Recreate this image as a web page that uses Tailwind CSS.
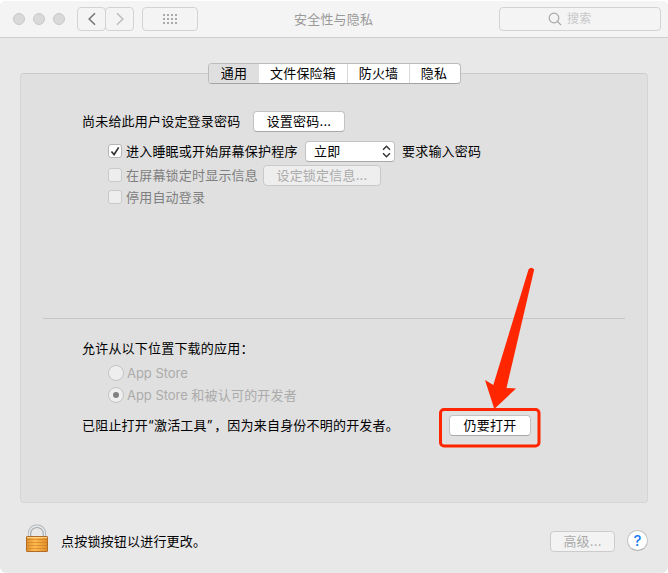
<!DOCTYPE html>
<html lang="zh-CN">
<head>
<meta charset="utf-8">
<title>安全性与隐私</title>
<script src="https://cdn.jsdelivr.net/npm/@tailwindcss/browser@4"></script>
</head>
<body class="w-[668px] h-[573px] overflow-hidden bg-white">
<div class="relative pt-px w-[668px] h-[573px] font-['Inter','Noto_Sans_CJK_SC',sans-serif] text-[13px] leading-[20px] tracking-[0.2px] text-black whitespace-nowrap">
<div class="w-[668px] h-[572px] rounded-[6px] bg-[#e8e8e8] overflow-hidden flex flex-col">
  <header class="h-[37px] shrink-0 bg-[#f4f4f4] border-b border-[#d0d0d0] flex items-center pl-[13px] pr-[7px]">
    <div class="flex gap-2">
      <span class="size-3 rounded-full bg-[#d9d9d9] border border-[#c9c9c9]"></span>
      <span class="size-3 rounded-full bg-[#d9d9d9] border border-[#c9c9c9]"></span>
      <span class="size-3 rounded-full bg-[#d9d9d9] border border-[#c9c9c9]"></span>
    </div>
    <div class="ml-3 flex">
      <button class="w-[29px] h-6 border border-[#d3d3d3] rounded-[4px] flex items-center justify-center"><svg class="size-[14px]" viewBox="0 0 14 14" fill="none" stroke="#777" stroke-width="1.6"><path d="M10 1.3 4.2 7 10 12.7"/></svg></button>
      <button class="-ml-px w-[29px] h-6 border border-[#d3d3d3] rounded-[4px] flex items-center justify-center"><svg class="size-[14px]" viewBox="0 0 14 14" fill="none" stroke="#bcbcbc" stroke-width="1.5"><path d="M4 1.3 9.8 7 4 12.7"/></svg></button>
    </div>
    <button class="ml-2 w-14 h-6 border border-[#d3d3d3] rounded-[4px] flex items-center justify-center">
      <svg width="14" height="10" viewBox="0 0 14 10" stroke="#aaa" stroke-width="2" stroke-dasharray="2 2"><path d="M0 1H14M0 5H14M0 9H14"/></svg>
    </button>
    <h1 class="ml-[96px] w-[80px] text-[#999]">安全性与隐私</h1>
    <div class="ml-auto w-[162px] h-6 border border-[#d3d3d3] rounded-[4px] flex items-center pl-[48px] text-[#c8c8c8] text-[12px]">
      <svg class="size-[14px] mr-[5px]" viewBox="0 0 14 14" fill="none" stroke="#a8a8a8" stroke-width="1.2"><circle cx="6" cy="6" r="4.8"/><path d="m9.5 9.5 3.6 3.6"/></svg>搜索
    </div>
  </header>

  <main class="mt-[35px] mx-5 h-[430px] w-[628px] shrink-0 rounded-[4px] border border-[#d5d5d5] border-t-[#cbcbcb] bg-[#e0e0e0] flex flex-col">
    <nav class="-mt-[11px] ml-[187px] w-[253px] h-[21px] shrink-0 rounded-[4px] border border-[#bcbcbc] border-b-[#a3a3a3] bg-white flex text-center leading-[19px]">
      <span class="w-[50px] bg-[#dfdfdf] rounded-l-[3px]">通用</span>
      <span class="w-[89px] border-r border-[#d8d8d8]">文件保险箱</span>
      <span class="w-[62px] border-r border-[#d8d8d8]">防火墙</span>
      <span class="w-[48px]">隐私</span>
    </nav>
    <section class="h-[234px] shrink-0 pt-[27px] pl-[61px]">
      <div class="h-[21px] flex items-center">
        <span class="-mt-px w-[171px]">尚未给此用户设定登录密码</span>
        <button class="w-[92px] h-[21px] rounded-[4px] border border-[#c3c3c3] border-b-[#a9a9a9] bg-white leading-[19px]">设置密码...</button>
      </div>
      <div class="mt-[9px] h-[21px] flex items-center pl-[26px]">
        <span class="-mt-px size-[14px] rounded-[3px] border border-[#b5b5b5] bg-white"><svg class="size-3" viewBox="0 0 12 12" fill="none" stroke="#333" stroke-width="1.7"><path d="m2.4 6.5 2.7 3L9.7 2.4"/></svg></span>
        <span class="-mt-[2px] ml-1 w-[179px]">进入睡眠或开始屏幕保护程序</span>
        <div class="w-[90px] h-[21px] rounded-[4px] border border-[#c3c3c3] border-b-[#a9a9a9] bg-white flex items-center justify-between pl-2 pr-[3px]"><span class="-mt-[2px]">立即</span><svg width="9" height="13" viewBox="0 0 9 13" fill="none" stroke="#333" stroke-width="1.4"><path d="m1 4.7 3.5-3.5L8 4.7M1 8.3l3.5 3.5L8 8.3"/></svg></div>
        <span class="-mt-[2px] ml-[7px]">要求输入密码</span>
      </div>
      <div class="mt-[3px] h-[21px] flex items-center pl-[26px] text-[#7f7f7f]">
        <span class="-mt-px size-[14px] rounded-[3px] border border-[#c9c9c9] bg-[#eee]"></span>
        <span class="-mt-px ml-1 w-[137px]">在屏幕锁定时显示信息</span>
        <button class="w-[118px] h-[21px] rounded-[4px] border border-[#c9c9c9] bg-[#eee] text-[#ababab] leading-[19px]">设定锁定信息...</button>
      </div>
      <div class="h-[21px] flex items-center pl-[26px] text-[#7f7f7f]">
        <span class="size-[14px] rounded-[3px] border border-[#c9c9c9] bg-[#eee]"></span>
        <span class="ml-1">停用自动登录</span>
      </div>
    </section>
    <hr class="mx-[22px] border-0 h-px bg-[#c6c6c6] shrink-0">
    <section class="pt-[19px] pl-[61px]">
      <p class="h-5">允许从以下位置下载的应用：</p>
      <div class="mt-1 h-[22px] flex items-center pl-[26px] text-[#ababab]"><span class="size-4 rounded-full border border-[#c4c4c4] bg-[#eee]"></span><span class="ml-[3px] tracking-[-0.04px]">App Store</span></div>
      <div class="h-[22px] flex items-center pl-[26px] text-[#ababab]"><span class="size-4 rounded-full border border-[#c4c4c4] bg-[#eee] flex items-center justify-center"><i class="size-[6px] rounded-full bg-[#808080]"></i></span><span class="ml-[3px]"><span class="tracking-[-0.04px]">App Store </span>和被认可的开发者</span></div>
      <div class="mt-[9px] h-[21px] flex items-center">
        <span class="-mt-[2px] w-[367px]">已阻止打开“激活工具”<span class="ml-[1.5px]">，</span>因为来自身份不明的开发者。</span>
        <button class="w-[82px] h-[21px] rounded-[4px] border border-[#c3c3c3] border-b-[#a9a9a9] bg-white leading-[19px]">仍要打开</button>
      </div>
    </section>
  </main>

  <footer class="flex-1 flex items-start pl-[25px] pr-5">
    <svg class="mt-[21px]" width="24" height="29" viewBox="0 0 24 29">
      <defs><linearGradient id="brass" x2="1"><stop stop-color="#e0912c"/><stop offset=".4" stop-color="#ffbc52"/><stop offset="1" stop-color="#e08c28"/></linearGradient></defs>
      <path d="M4.6 13V9.5C4.6 5.200 8 2.300 12 2.300s7.400 2.900 7.400 7.200V13" fill="none" stroke="#a1a6ab" stroke-width="3.4"/>
      <path d="M4.300 13V9.500C4.300 5 8 2.100 12 2.100s7.600 2.900 7.600 7.400V13" fill="none" stroke="#e5e9ec" stroke-width="1.600"/>
      <rect x="1.500" y="12.500" width="21" height="15" rx=".5" fill="url(#brass)" stroke="#b06c28"/>
      <path d="M2 15.500H22M2 18.500H22M2 21.500H22M2 24.500H22" stroke="#cd7c20" stroke-width="1" opacity=".6"/>
      <path d="M2 13.500H22" stroke="#ffd58a" stroke-width="1"/>
    </svg>
    <span class="ml-3 mt-[28px]">点按锁按钮以进行更改。</span>
    <button class="ml-auto mt-[28px] w-[65px] h-[21px] rounded-[4px] border border-[#ccc] bg-[#f3f3f3] text-[#ababab] leading-[19px]">高级...</button>
    <button class="ml-3 mt-[27px] size-[21px] rounded-full border border-[#c0c0c0] border-b-[#aaa] bg-white text-[#1a7cf5] text-[15px] font-medium leading-[19px] tracking-normal">?</button>
  </footer>
</div>
<svg class="absolute left-0 top-0 pointer-events-none" width="668" height="573" viewBox="0 0 668 573" fill="none">
  <rect x="440.5" y="409.5" width="98.5" height="36.5" rx="3.5" stroke="#ff2600" stroke-width="3"/>
  <path d="M528.500 269.500Q531 266 534.200 269.500L506.500 388 516 388.500 494.300 409 485 380 493.300 385Z" fill="#ff2600"/>
</svg>
</div>
</body>
</html>
